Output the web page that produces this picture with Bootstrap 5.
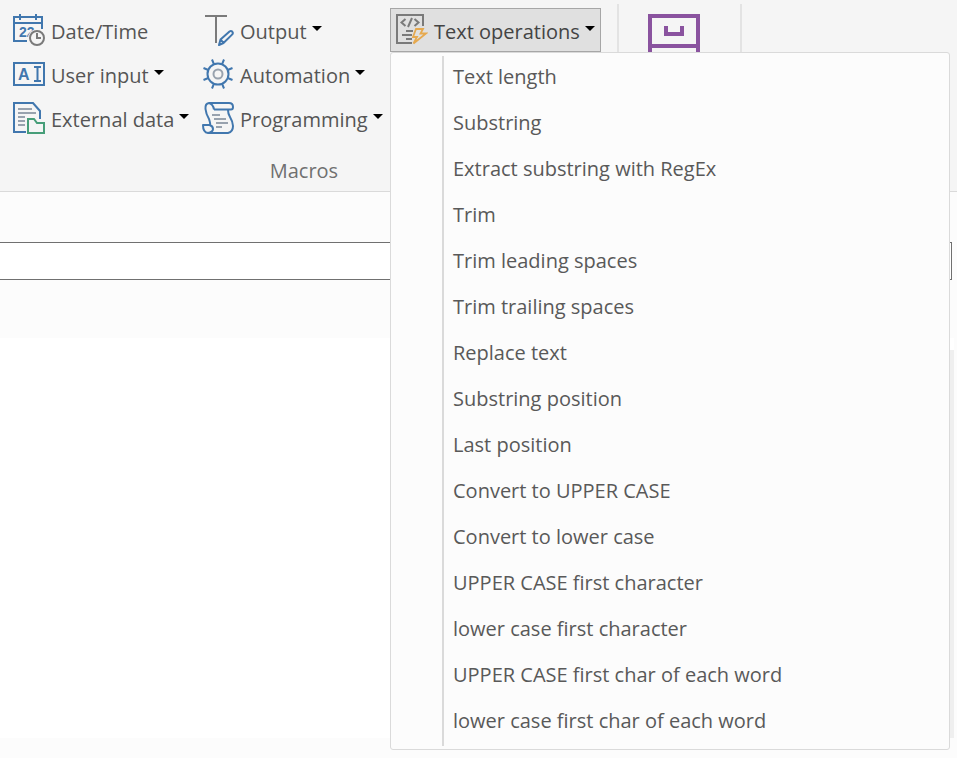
<!DOCTYPE html>
<html lang="en">
<head>
<meta charset="utf-8">
<meta name="viewport" content="width=device-width, initial-scale=1">
<title>Text operations</title>
<link href="https://cdn.jsdelivr.net/npm/bootstrap@5.3.0/dist/css/bootstrap.min.css" rel="stylesheet">
<style>
  body { font-family: "Open Sans", "Noto Sans", sans-serif; font-size: 20px; line-height: 28px; color: #555; background: #fcfcfc; }
  .ribbon { background: #f5f5f5; border-bottom: 1px solid #dadada; height: 192px; }
  .ribbon-group { border-right: 2px solid #e3e3e3; margin-top: 4px; padding: 4px 16px 0 7px; }
  .macro-grid { display: grid; grid-template-columns: 189px 194px auto; grid-auto-rows: 44px; }
  .tool-btn { --bs-btn-font-size: 20px; --bs-btn-line-height: 28px; --bs-btn-color: #555; --bs-btn-padding-x: 5px; --bs-btn-padding-y: 0px;
    --bs-btn-border-radius: 0; --bs-btn-active-bg: #e0e0e0; --bs-btn-active-border-color: #a6a6a6; --bs-btn-active-color: #444;
    --bs-btn-hover-bg: #e8e8e8; height: 44px; padding-top: 3px; display: inline-flex; align-items: center; gap: 6px; white-space: nowrap; }
  .tool-btn svg { width: 32px; height: 32px; flex: none; margin-bottom: 4px; }
  .tool-btn.dropdown-toggle::after { border-top: 5px solid #000; border-left: 5px solid transparent; border-right: 5px solid transparent; margin: 0 0 7px -1px; }
  .group-label { color: #707070; padding-top: 17px; }
  .cabinet-group { width: 123px; padding: 10px 0 0 29px; }
  .ops-menu { --bs-dropdown-bg: #fcfcfc; --bs-dropdown-border-color: #dadada; --bs-dropdown-border-radius: 3px; --bs-dropdown-padding-y: 3px;
    --bs-dropdown-font-size: 20px; --bs-dropdown-link-color: #595959; --bs-dropdown-item-padding-y: 1px; --bs-dropdown-item-padding-x: 9px;
    top: 100%; left: 0; width: 560px; padding-left: 51px; }
  .ops-list { border-left: 2px solid #dadada; }
  .ops-list .dropdown-item { line-height: 40px; padding-bottom: 5px; }
  .field-row { padding: 50px 5px 58px 0; }
  .value-field { height: 38px; border: 1px solid #707070; border-left: 0; border-radius: 0; background: #fff; }
  .work-area { background: #fff; margin: 0 3px 20px 0; }
  .track { width: 16px; background: #efefef; margin-top: 12px; }
  .blue { stroke: #4177ae; } .gray { stroke: #7a7a7a; } .slate { stroke: #98a2ae; } .green { stroke: #479e79; } .gold { stroke: #e6a94f; }
  .glyph { fill: #4177ae; font-family: "Liberation Sans", sans-serif; font-weight: 700; }
</style>
<script src="https://cdn.jsdelivr.net/npm/bootstrap@5.3.0/dist/js/bootstrap.bundle.min.js"></script>
</head>
<body class="d-flex flex-column min-vh-100">
<header class="ribbon d-flex">
  <section class="ribbon-group" aria-labelledby="macros-label">
    <div class="macro-grid">
      <div><button type="button" class="btn tool-btn">
        <svg viewBox="0 0 32 32" fill="none" stroke-width="2" aria-hidden="true"><path class="blue" d="M14 27H1V3H29V15M1 9H29M7 0V6M23 0V6"/><text class="glyph" x="6" y="23" font-size="14">22</text><circle cx="24" cy="24" r="9" fill="#f5f5f5"/><circle class="gray" cx="24" cy="24" r="7"/><path class="gray" d="M24 19V24H28"/></svg>Date/Time</button></div>
      <div><button type="button" class="btn tool-btn dropdown-toggle">
        <svg viewBox="0 0 32 32" fill="none" stroke-width="2" aria-hidden="true"><path class="gray" d="M3 2H25M14 2V29"/><path d="M17 31L18.500 25.500L27.500 17Q29 16 30.500 17.500Q31.500 19 30.500 20.500L21.500 29Z" stroke="#f5f5f5" stroke-width="4"/><path class="blue" fill="#f5f5f5" stroke-linejoin="round" d="M17 31L18.500 25.500L27.500 17.500Q29 16.500 30.200 17.600Q31.400 19 30.300 20.400L21.500 29ZM18.500 25.500L21.500 29"/></svg>Output</button></div>
      <div class="dropdown"><button type="button" class="btn tool-btn dropdown-toggle active" aria-expanded="true">
        <svg viewBox="0 0 32 32" fill="none" stroke-width="2" aria-hidden="true"><path class="gray" d="M16 29H1V1H27V12M9.500 5L5.500 8.500L9.500 12M18.500 5L22.500 8.500L18.500 12M16 4L12 13M10 17H17M6 21H16M10 25H16"/><path class="gold" stroke-width="1.800" d="M20 15H27L24.500 19.500H30L17.500 29.500L21 23H17Z"/></svg>Text operations</button>
        <div class="dropdown-menu show ops-menu">
          <div class="ops-list">
            <a class="dropdown-item" href="#">Text length</a>
            <a class="dropdown-item" href="#">Substring</a>
            <a class="dropdown-item" href="#">Extract substring with RegEx</a>
            <a class="dropdown-item" href="#">Trim</a>
            <a class="dropdown-item" href="#">Trim leading spaces</a>
            <a class="dropdown-item" href="#">Trim trailing spaces</a>
            <a class="dropdown-item" href="#">Replace text</a>
            <a class="dropdown-item" href="#">Substring position</a>
            <a class="dropdown-item" href="#">Last position</a>
            <a class="dropdown-item" href="#">Convert to UPPER CASE</a>
            <a class="dropdown-item" href="#">Convert to lower case</a>
            <a class="dropdown-item" href="#">UPPER CASE first character</a>
            <a class="dropdown-item" href="#">lower case first character</a>
            <a class="dropdown-item" href="#">UPPER CASE first char of each word</a>
            <a class="dropdown-item" href="#">lower case first char of each word</a>
          </div>
        </div>
      </div>
      <div><button type="button" class="btn tool-btn dropdown-toggle">
        <svg viewBox="0 0 32 32" fill="none" stroke-width="2" aria-hidden="true"><path class="blue" d="M1 5H31V27H1ZM21 9H28M21 23H28M24.500 9V23"/><text class="glyph" x="5" y="22" font-size="16">A</text></svg>User input</button></div>
      <div><button type="button" class="btn tool-btn dropdown-toggle">
        <svg viewBox="0 0 32 32" fill="none" stroke-width="2" aria-hidden="true"><circle class="blue" cx="16" cy="16" r="10.500"/><circle class="slate" cx="16" cy="16" r="4.500"/><path class="blue" d="M20 6.300L22 1.500M25.700 12L30.500 10M25.700 20L30.500 22M20 25.700L22 30.500M12 25.700L10 30.500M6.300 20L1.500 22M6.300 12L1.500 10M12 6.300L10 1.500"/></svg>Automation</button></div>
      <div></div>
      <div><button type="button" class="btn tool-btn dropdown-toggle">
        <svg viewBox="0 0 32 32" fill="none" stroke-width="2" aria-hidden="true"><path class="blue" d="M13 30H1V1H20L27 9V17"/><path class="slate" d="M5 7H19M5 11H23M5 15H12M5 19H12M5 23H12"/><path class="green" d="M15 17H21L24 21H31V31H15Z"/></svg>External data</button></div>
      <div><button type="button" class="btn tool-btn dropdown-toggle">
        <svg viewBox="0 0 32 32" fill="none" stroke-width="2" stroke-linejoin="round" aria-hidden="true"><path class="blue" d="M12 7.500H29Q31 7.500 31 5Q31 1 27 1H7Q3 1.500 3.500 7Q4 12 7 17Q9 23 7.500 23H1Q1 30.500 6 31H26Q31 30 31 24Q31 20 28 15Q26 12 26 8M7 1Q11 2 12 7.500M7.500 23Q11 24 11 27Q11 30 6 31"/><path class="slate" d="M10 13H18M12 17H24M14 21H26M14 25H20"/></svg>Programming</button></div>
    </div>
    <div id="macros-label" class="group-label text-center">Macros</div>
  </section>
  <section class="ribbon-group cabinet-group">
    <button type="button" class="btn p-0 border-0 d-block" aria-label="Archive">
      <svg class="d-block" width="52" height="68" viewBox="0 0 52 68" fill="none" stroke="#8a539f" stroke-width="4" aria-hidden="true"><path d="M2 2H50V66H2ZM2 32H50M18 12V20H34V12"/></svg>
    </button>
  </section>
</header>
<main class="flex-grow-1 d-flex flex-column">
  <div class="field-row"><input type="text" class="form-control value-field shadow-none" aria-label="Value"></div>
  <div class="work-area flex-grow-1 d-flex justify-content-end"><div class="track"></div></div>
</main>
</body>
</html>
